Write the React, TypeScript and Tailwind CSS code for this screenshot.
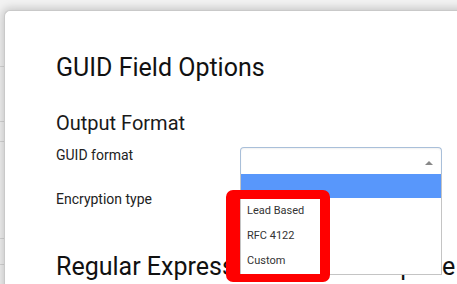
import React from "react";

export default function App() {
  const font = { fontFamily: "Roboto, 'Noto Sans', sans-serif" };
  return (
    <div
      className="relative isolate w-[457px] h-[284px] overflow-hidden bg-[#f2f2f2]"
      style={font}
    >
      {/* page behind the modal */}
      <div className="flex flex-col w-full">
        <div className="h-[67px] border-b border-[#d6d6d6]" />
        <div className="h-[55px] border-b border-[#d6d6d6]" />
        <div className="h-[20px] border-b border-[#d6d6d6]" />
        <div className="h-[97px] border-b border-[#d6d6d6]" />
        <div className="h-[26px] border-b border-[#d6d6d6]" />
      </div>

      {/* modal */}
      <div className="absolute z-[1] left-[4px] top-[10px] w-[500px] h-[320px] bg-white rounded-tl-[6px] border-l border-t border-[#c9c9c9] shadow-[0_0_9px_2px_rgba(0,0,0,0.18)] pl-[51px] pt-[44px] text-[#222]">
        <div className="text-[25px] leading-[25px] text-[#111]">GUID Field Options</div>
        <div className="mt-[32.5px] text-[20px] leading-[20px] text-[#1a1a1a]">Output Format</div>

        <div className="mt-[14.5px] flex h-[28px]">
          <div className="w-[184px] text-[14px] leading-[14px] pt-[0.5px]">GUID format</div>
          <div className="relative w-[202px] h-[27px] bg-white border border-b-0 border-[#a9bfd9] rounded-t-[4px] shadow-[inset_0_1px_2px_rgba(0,0,0,0.06)]">
            <div className="absolute right-[8px] top-[13px] w-0 h-0 border-x-[4px] border-x-transparent border-b-[4px] border-b-[#888]" />
          </div>
        </div>

        <div className="mt-[16.5px] flex h-[28px]">
          <div className="w-[184px] text-[14px] leading-[14px]">Encryption type</div>
          <div className="w-[202px] h-[28px] border border-[#aaa] rounded-[4px]" />
        </div>

        <div className="mt-[34px] text-[25px] leading-[25px] text-[#111] whitespace-nowrap">
          Regular Expression Match Template
        </div>
      </div>

      {/* open dropdown (rendered over the page, like a body-level popup) */}
      <div className="absolute z-10 left-[240px] top-[174px] w-[202px] h-[101px] bg-white border-x border-b border-[#c4c4c4] flex flex-col">
        <div className="h-[24px] bg-[#5897fb]" />
        <div className="h-[25px] flex items-center px-[6px] text-[11px] leading-[11px] text-[#333]">Lead Based</div>
        <div className="h-[25px] flex items-center px-[6px] text-[11px] leading-[11px] text-[#333]">RFC 4122</div>
        <div className="h-[26px] flex items-center px-[6px] pb-[1px] text-[11px] leading-[11px] text-[#333]">Custom</div>
      </div>

      {/* annotation */}
      <div className="absolute left-[226px] top-[190px] w-[104px] h-[92px] z-20 rounded-[7px] border-solid border-[#ff0000] border-l-[14px] border-t-[9px] border-r-[10px] border-b-[8px]" />
    </div>
  );
}
